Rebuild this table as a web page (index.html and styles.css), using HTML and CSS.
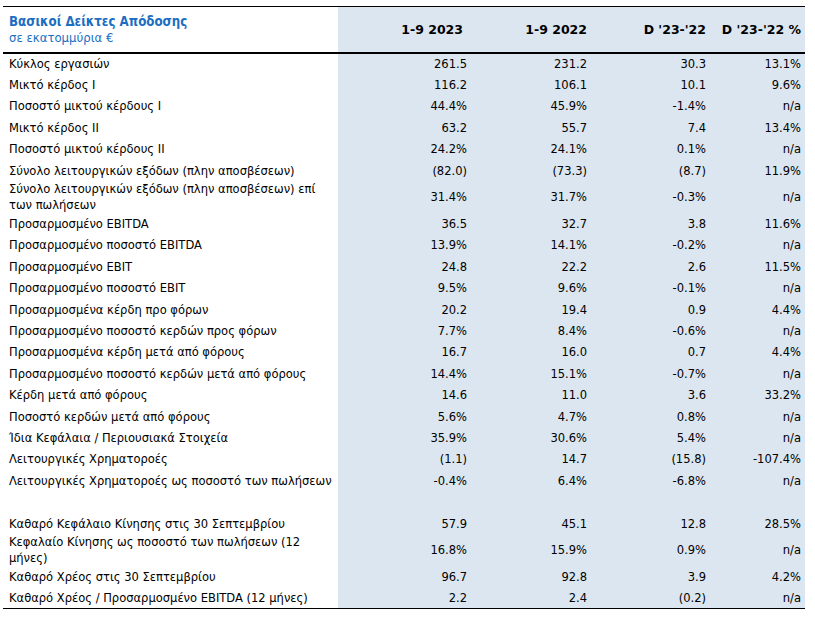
FILE: index.html
```html
<!DOCTYPE html>
<html lang="el">
<head>
  <meta charset="UTF-8">
  <meta name="viewport" content="width=device-width, initial-scale=1.0">
  <title>Βασικοί Δείκτες Απόδοσης</title>
  <link rel="stylesheet" href="styles.css">
</head>
<body>
  <table class="kpi">
    <colgroup>
      <col class="col-label">
      <col class="col-a">
      <col class="col-b">
      <col class="col-c">
      <col class="col-d">
    </colgroup>
    <thead>
      <tr>
        <th class="title-cell">
          <div class="title">Βασικοί Δείκτες Απόδοσης</div>
          <div class="subtitle">σε εκατομμύρια €</div>
        </th>
        <th class="first-num">1-9 2023</th>
        <th>1-9 2022</th>
        <th>D '23-'22</th>
        <th>D '23-'22 %</th>
      </tr>
    </thead>
    <tbody>
      <tr><td>Κύκλος εργασιών</td><td>261.5</td><td>231.2</td><td>30.3</td><td>13.1%</td></tr>
      <tr><td>Μικτό κέρδος I</td><td>116.2</td><td>106.1</td><td>10.1</td><td>9.6%</td></tr>
      <tr><td>Ποσοστό μικτού κέρδους I</td><td>44.4%</td><td>45.9%</td><td>-1.4%</td><td>n/a</td></tr>
      <tr><td>Μικτό κέρδος II</td><td>63.2</td><td>55.7</td><td>7.4</td><td>13.4%</td></tr>
      <tr><td>Ποσοστό μικτού κέρδους II</td><td>24.2%</td><td>24.1%</td><td>0.1%</td><td>n/a</td></tr>
      <tr><td>Σύνολο λειτουργικών εξόδων (πλην αποσβέσεων)</td><td>(82.0)</td><td>(73.3)</td><td>(8.7)</td><td>11.9%</td></tr>
      <tr class="tall"><td>Σύνολο λειτουργικών εξόδων (πλην αποσβέσεων) επί<br>των πωλήσεων</td><td>31.4%</td><td>31.7%</td><td>-0.3%</td><td>n/a</td></tr>
      <tr><td>Προσαρμοσμένο EBITDA</td><td>36.5</td><td>32.7</td><td>3.8</td><td>11.6%</td></tr>
      <tr><td>Προσαρμοσμένο ποσοστό EBITDA</td><td>13.9%</td><td>14.1%</td><td>-0.2%</td><td>n/a</td></tr>
      <tr><td>Προσαρμοσμένο EBIT</td><td>24.8</td><td>22.2</td><td>2.6</td><td>11.5%</td></tr>
      <tr><td>Προσαρμοσμένο ποσοστό EBIT</td><td>9.5%</td><td>9.6%</td><td>-0.1%</td><td>n/a</td></tr>
      <tr><td>Προσαρμοσμένα κέρδη προ φόρων</td><td>20.2</td><td>19.4</td><td>0.9</td><td>4.4%</td></tr>
      <tr><td>Προσαρμοσμένο ποσοστό κερδών προς φόρων</td><td>7.7%</td><td>8.4%</td><td>-0.6%</td><td>n/a</td></tr>
      <tr><td>Προσαρμοσμένα κέρδη μετά από φόρους</td><td>16.7</td><td>16.0</td><td>0.7</td><td>4.4%</td></tr>
      <tr><td>Προσαρμοσμένο ποσοστό κερδών μετά από φόρους</td><td>14.4%</td><td>15.1%</td><td>-0.7%</td><td>n/a</td></tr>
      <tr><td>Κέρδη μετά από φόρους</td><td>14.6</td><td>11.0</td><td>3.6</td><td>33.2%</td></tr>
      <tr><td>Ποσοστό κερδών μετά από φόρους</td><td>5.6%</td><td>4.7%</td><td>0.8%</td><td>n/a</td></tr>
      <tr><td>Ίδια Κεφάλαια / Περιουσιακά Στοιχεία</td><td>35.9%</td><td>30.6%</td><td>5.4%</td><td>n/a</td></tr>
      <tr><td>Λειτουργικές Χρηματοροές</td><td>(1.1)</td><td>14.7</td><td>(15.8)</td><td>-107.4%</td></tr>
      <tr><td>Λειτουργικές Χρηματοροές ως ποσοστό των πωλήσεων</td><td>-0.4%</td><td>6.4%</td><td>-6.8%</td><td>n/a</td></tr>
      <tr><td></td><td></td><td></td><td></td><td></td></tr>
      <tr><td>Καθαρό Κεφάλαιο Κίνησης στις 30 Σεπτεμβρίου</td><td>57.9</td><td>45.1</td><td>12.8</td><td>28.5%</td></tr>
      <tr class="tall"><td>Κεφαλαίο Κίνησης ως ποσοστό των πωλήσεων (12<br>μήνες)</td><td>16.8%</td><td>15.9%</td><td>0.9%</td><td>n/a</td></tr>
      <tr><td>Καθαρό Χρέος στις 30 Σεπτεμβρίου</td><td>96.7</td><td>92.8</td><td>3.9</td><td>4.2%</td></tr>
      <tr class="last"><td>Καθαρό Χρέος / Προσαρμοσμένο EBITDA (12 μήνες)</td><td>2.2</td><td>2.4</td><td>(0.2)</td><td>n/a</td></tr>
    </tbody>
  </table>
</body>
</html>
```

FILE: styles.css
```css
/* page */
body {
  margin: 0;
  padding: 6px 0 0 3px;
  background: #fff;
  font-family: "DejaVu Sans Condensed", "DejaVu Sans", Verdana, sans-serif;
  font-stretch: condensed;
  font-size: 12.8px;
  color: #000;
}

/* table */
.kpi {
  border-collapse: collapse;
  table-layout: fixed;
  width: 802px;
}

.col-label { width: 335px; }
.col-a { width: 133px; }
.col-b { width: 120px; }
.col-c { width: 119px; }
.col-d { width: 95px; }

.kpi th,
.kpi td {
  padding: 0 4px 0 0;
  text-align: right;
  white-space: nowrap;
  background: #dce6f1;
}

.kpi th:first-child,
.kpi td:first-child {
  padding: 0 0 0 6px;
  text-align: left;
  background: #fff;
}

/* header */
.kpi thead tr {
  height: 46px;
  border-top: 1px solid #000;
  border-bottom: 2px solid #000;
}

.kpi th {
  font-family: "DejaVu Sans", Verdana, sans-serif;
  font-stretch: normal;
  font-weight: bold;
  font-size: 12.5px;
}

.kpi th.first-num {
  padding-right: 8px;
}

.title {
  font-family: "DejaVu Sans Condensed", "DejaVu Sans", sans-serif;
  font-stretch: condensed;
  color: #1b6ec2;
  font-size: 13.2px;
  font-weight: bold;
  line-height: 17px;
}

.subtitle {
  font-family: "DejaVu Sans Condensed", "DejaVu Sans", sans-serif;
  font-stretch: condensed;
  color: #1b6ec2;
  font-size: 13px;
  font-weight: normal;
  line-height: 15px;
}

/* body rows */
.kpi tbody tr {
  height: 21.4px;
}

.kpi tbody tr.tall {
  height: 32px;
}

.kpi tbody tr.tall td:first-child {
  line-height: 16px;
}

.kpi tbody tr.last {
  border-bottom: 1px solid #000;
}
```
